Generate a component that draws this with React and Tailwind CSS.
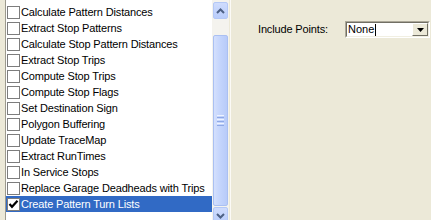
import React from "react";

const tasks = [
  "Calculate Pattern Distances",
  "Extract Stop Patterns",
  "Calculate Stop Pattern Distances",
  "Extract Stop Trips",
  "Compute Stop Trips",
  "Compute Stop Flags",
  "Set Destination Sign",
  "Polygon Buffering",
  "Update TraceMap",
  "Extract RunTimes",
  "In Service Stops",
  "Replace Garage Deadheads with Trips",
  "Create Pattern Turn Lists",
];

function CheckBox({ checked }) {
  return (
    <div className="w-[13px] h-[13px] shrink-0 border border-[#7d7d7d] bg-white flex items-center justify-center">
      {checked && (
        <svg width="11" height="11" viewBox="0 0 11 11">
          <path d="M1.5 5 L4 7.8 L9.5 1.8" fill="none" stroke="#000" strokeWidth="2.2" />
        </svg>
      )}
    </div>
  );
}

function ArrowBtn({ up }) {
  return (
    <div className="h-[17px] w-[15px] mx-auto rounded-[2px] border border-[#b4c8f6] bg-gradient-to-b from-[#cfdcfd] to-[#b9cdfb] flex items-center justify-center">
      <svg width="9" height="6" viewBox="0 0 9 6">
        <path
          d={up ? "M1 5 L4.5 1.5 L8 5" : "M1 1 L4.5 4.5 L8 1"}
          fill="none"
          stroke="#4d6185"
          strokeWidth="2"
        />
      </svg>
    </div>
  );
}

export default function App() {
  return (
    <div
      className="w-[431px] h-[220px] overflow-hidden bg-[#ece9d8] flex text-[11px] text-black"
      style={{ fontFamily: '"Liberation Sans", Arial, sans-serif' }}
    >
      {/* list box */}
      <div className="ml-[5px] w-[226px] h-[230px] shrink-0 flex border-l border-[#9c9a8e] border-r border-r-[#fbfaf6]">
        <div className="w-[206px] bg-white pt-[4px]">
          {tasks.map((t, i) => {
            const sel = i === tasks.length - 1;
            return (
              <div
                key={t}
                className={`h-[16px] flex items-center pl-[1px] whitespace-nowrap ${
                  sel ? "bg-[#316ac5] text-white" : ""
                }`}
              >
                <CheckBox checked={sel} />
                <span className="ml-[1px] leading-[16px] tracking-[-0.15px]">{t}</span>
              </div>
            );
          })}
        </div>
        <div className="w-[17px] bg-[#f4f3ee] flex flex-col pt-[2px]">
          <ArrowBtn up />
          <div className="h-[16px]" />
          <div className="h-[171px] mx-[1px] rounded-[2px] border border-[#aac0f2] bg-gradient-to-r from-[#d4e0fd] via-[#c3d4fc] to-[#b8cbf9] flex flex-col items-center justify-center gap-[1px]">
            <div className="w-[7px] h-[1px] bg-[#eef3ff]" />
            <div className="w-[7px] h-[1px] bg-[#8fa9e6]" />
            <div className="w-[7px] h-[1px] bg-[#eef3ff]" />
            <div className="w-[7px] h-[1px] bg-[#8fa9e6]" />
            <div className="w-[7px] h-[1px] bg-[#eef3ff]" />
            <div className="w-[7px] h-[1px] bg-[#8fa9e6]" />
          </div>
          <div className="h-[1px]" />
          <ArrowBtn />
        </div>
      </div>

      {/* options */}
      <div className="flex-1 flex items-start pt-[21px] pl-[27px]">
        <span className="leading-[17px] w-[69px] shrink-0 whitespace-nowrap tracking-[-0.15px]">
          Include Points:
        </span>
        <div className="ml-[18px] w-[85px] h-[17px] shrink-0 border-t border-l border-[#aca899] border-r border-b border-r-white border-b-white">
          <div className="h-full border-t border-l border-[#716f64] border-r border-b border-r-[#f1efe2] border-b-[#f1efe2] bg-white flex items-center">
            <span className="pl-[1px] leading-[13px] flex items-center">
              None
              <span className="inline-block w-[1px] h-[12px] bg-black ml-[1px]" />
            </span>
            <div className="ml-auto w-[16px] h-full bg-[#ece9d8] border-t border-l border-white border-r border-b border-r-[#716f64] border-b-[#716f64] flex items-center justify-center">
              <svg width="7" height="4" viewBox="0 0 7 4">
                <path d="M0 0 H7 L3.5 4 Z" fill="#000" />
              </svg>
            </div>
          </div>
        </div>
      </div>
    </div>
  );
}
